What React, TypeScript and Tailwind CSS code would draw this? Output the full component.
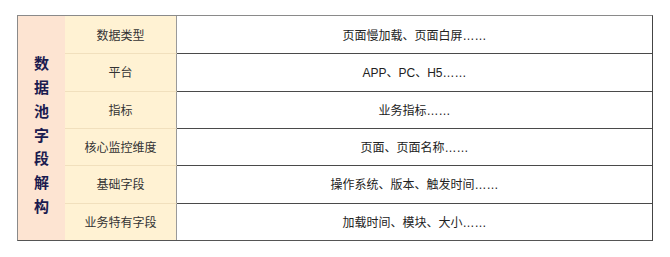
import React from 'react';

const rows = [
  { label: '数据类型', value: '页面慢加载、页面白屏……' },
  { label: '平台', value: 'APP、PC、H5……' },
  { label: '指标', value: '业务指标……' },
  { label: '核心监控维度', value: '页面、页面名称……' },
  { label: '基础字段', value: '操作系统、版本、触发时间……' },
  { label: '业务特有字段', value: '加载时间、模块、大小……' },
];

const App: React.FC = () => {
  return (
    <div
      className="w-[670px] h-[257px] bg-white pt-[15px] pl-[17px]"
      style={{ fontFamily: '"Liberation Sans", "Noto Sans CJK SC", sans-serif' }}
    >
      <div className="flex w-[636px] h-[226px] border border-[#8a8a8a] border-r-[#444] border-b-[#555]">
        {/* Title column */}
        <div className="w-[47px] bg-[#fde4d2] flex flex-col items-center justify-center pt-[15px]">
          {'数据池字段解构'.split('').map((ch, i) => (
            <span key={i} className="text-[15px] leading-[23.8px] font-bold text-[#1b1b4f]">
              {ch}
            </span>
          ))}
        </div>

        {/* Rows */}
        <div className="flex-1 flex flex-col">
          {rows.map((row, i) => (
            <div key={i} className="flex flex-1">
              <div
                className={`w-[112px] bg-[#fff2d3] border-r border-[#9a9a9a] flex items-center justify-center pt-[2px] text-[12px] text-[#333] ${
                  i > 0 ? 'border-t border-t-[#f1e0bd]' : ''
                }`}
              >
                {row.label}
              </div>
              <div
                className={`flex-1 flex items-center justify-center pt-[2px] text-[12px] text-[#222] ${
                  i > 0 ? 'border-t border-t-[#4a4a4a]' : ''
                }`}
              >
                {row.value}
              </div>
            </div>
          ))}
        </div>
      </div>
    </div>
  );
};

export default App;
